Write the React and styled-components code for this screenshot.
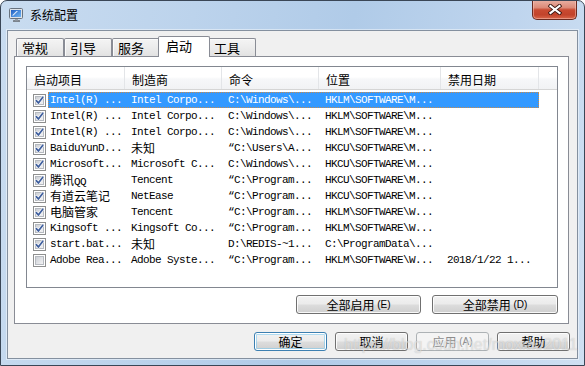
import React from "react";
import styled, { createGlobalStyle, css } from "styled-components";

const Global = createGlobalStyle`
  html, body { margin: 0; padding: 0; background: #ffffff; }
  body { font-family: "Noto Sans CJK SC", "Liberation Sans", sans-serif; }
  * { box-sizing: border-box; }
`;

const UI_FONT = `"Noto Sans CJK SC", "Liberation Sans", sans-serif`;

const Window = styled.div`
  position: relative;
  width: 585px;
  height: 366px;
  border: 1px solid #3a4656;
  border-radius: 7px 7px 0 0;
  background: linear-gradient(100deg, #c9dcf0 0%, #bcd3ec 30%, #b0cbe8 55%, #bfd5ee 80%, #cfe0f2 100%);
  display: flex;
  flex-direction: column;
  overflow: hidden;
`;

const TitleBar = styled.div`
  height: 29px;
  flex: none;
  display: flex;
  align-items: flex-start;
  padding-left: 7px;
  padding-right: 7px;
`;

const AppIcon = styled.svg`
  margin-top: 6px;
  flex: none;
`;

const Title = styled.div`
  margin-left: 6px;
  margin-top: 5px;
  font-family: ${UI_FONT};
  font-size: 12px;
  line-height: 18px;
  color: #000;
`;

const CloseBtn = styled.div`
  margin-left: auto;
  margin-top: -1px;
  width: 45px;
  height: 20px;
  border: 1px solid #6a2a20;
  border-top: none;
  border-radius: 0 0 5px 5px;
  background: linear-gradient(#e9b1a4 0%, #dc8a78 40%, #c94a31 52%, #c2432b 78%, #d9674a 100%);
  box-shadow: inset 0 0 0 1px rgba(255, 210, 200, 0.45);
  display: flex;
  align-items: center;
  justify-content: center;
`;

const Client = styled.div`
  flex: 1;
  margin: 0 6px 6px 6px;
  border: 1px solid #84909f;
  box-shadow: 0 0 0 1px rgba(255, 255, 255, 0.45);
  background: #f0f0f0;
  padding: 5px 8px 0 6px;
  display: flex;
  flex-direction: column;
`;

const TabStrip = styled.div`
  height: 20px;
  display: flex;
  align-items: flex-end;
  padding-left: 2px;
  position: relative;
  z-index: 2;
`;

const Tab = styled.div`
  width: 48px;
  height: 18px;
  border: 1px solid #898c95;
  border-bottom: none;
  border-radius: 2px 2px 0 0;
  padding-left: 5px;
  font-family: ${UI_FONT};
  font-size: 13px;
  line-height: 17px;
  color: #000;
  background: linear-gradient(#f4f4f4 0%, #ececec 50%, #e2e2e2 100%);
  box-shadow: inset 1px 1px 0 #fbfbfb;
  ${(p) =>
    p.$active &&
    css`
      width: 52px;
      height: 21px;
      margin: 0 -2px -1px -2px;
      padding-left: 7px;
      line-height: 18px;
      background: #ffffff;
      box-shadow: none;
      position: relative;
      z-index: 3;
    `}
`;

const Panel = styled.div`
  width: 555px;
  border: 1px solid #898c95;
  background: #ffffff;
  padding: 9px 10px 9px 11px;
  display: flex;
  flex-direction: column;
  position: relative;
  z-index: 1;
`;

const ListBox = styled.div`
  width: 532px;
  height: 222px;
  border: 1px solid #828790;
  background: #ffffff;
  display: flex;
  flex-direction: column;
`;

const HeaderRow = styled.div`
  height: 23px;
  display: flex;
  border-bottom: 1px solid #d5d5d5;
  background: linear-gradient(#ffffff 0%, #ffffff 45%, #f6f7f9 55%, #f1f2f4 100%);
`;

const HeaderCell = styled.div`
  width: ${(p) => p.$w}px;
  flex: none;
  border-right: ${(p) => (p.$last ? "none" : "1px solid #e3e5e8")};
  padding: 4px 0 0 7px;
  font-family: ${UI_FONT};
  font-size: 12px;
  line-height: 18px;
  color: #000;
  white-space: nowrap;
`;

const Rows = styled.div`
  padding-top: 2px;
  display: flex;
  flex-direction: column;
`;

const Row = styled.div`
  height: 16px;
  display: flex;
  align-items: center;
`;

const CheckArea = styled.div`
  width: 21px;
  flex: none;
  padding-left: 6px;
  display: flex;
  align-items: center;
`;

const RowBlock = styled.div`
  height: 16px;
  display: flex;
  color: ${(p) => (p.$sel ? "#ffffff" : "#000000")};
  background: ${(p) => (p.$sel ? "#3399ff" : "transparent")};
  outline: ${(p) => (p.$sel ? "1px dotted #c98a4a" : "none")};
  outline-offset: -1px;
`;

const Cell = styled.div`
  width: ${(p) => p.$w}px;
  flex: none;
  padding-left: ${(p) => p.$pad}px;
  font-family: "Liberation Mono", "Noto Sans CJK SC", monospace;
  font-size: 11px;
  letter-spacing: -0.6px;
  line-height: 16px;
  white-space: pre;
  overflow: hidden;
`;

const Han = styled.span`
  font-family: "Noto Sans CJK SC", sans-serif;
  font-size: 12px;
  letter-spacing: 0;
`;

const PanelActions = styled.div`
  margin-top: 7px;
  display: flex;
  justify-content: flex-end;
  gap: 11px;
`;

const DialogActions = styled.div`
  margin-top: 8px;
  display: flex;
  justify-content: flex-end;
  gap: 8px;
  margin-right: -1px;
`;

const Button = styled.div`
  width: ${(p) => p.$w}px;
  height: 19px;
  border: 1px solid ${(p) => (p.$disabled ? "#adb2b5" : p.$default ? "#3c7fb1" : "#707070")};
  border-radius: 3px;
  background: ${(p) =>
    p.$disabled
      ? "#f4f4f4"
      : "linear-gradient(#f2f2f2 0%, #ebebeb 49%, #dddddd 51%, #cfcfcf 100%)"};
  box-shadow: ${(p) =>
    p.$default
      ? "inset 0 0 0 1px #ffffff, inset 0 0 0 2px rgba(120, 200, 240, 0.55)"
      : p.$disabled
      ? "none"
      : "inset 0 0 0 1px rgba(255,255,255,0.85)"};
  display: flex;
  align-items: center;
  justify-content: center;
  font-family: ${UI_FONT};
  font-size: 12px;
  line-height: 17px;
  color: ${(p) => (p.$disabled ? "#8d8d8d" : "#000")};
  white-space: pre;
`;

const Mnemonic = styled.span`
  font-family: "Liberation Sans", sans-serif;
  font-size: 10px;
`;

const Watermark = styled.div`
  position: absolute;
  left: 343px;
  top: 334px;
  font-family: "Liberation Sans", sans-serif;
  font-size: 16px;
  line-height: 20px;
  color: rgba(255, 255, 255, 0.5);
  text-shadow: 0 0 1px rgba(90, 90, 90, 0.35);
  white-space: nowrap;
  pointer-events: none;
`;

const HAN = /([\u2E80-\u9FFF\uF900-\uFAFF\uFF00-\uFFEF]+)/;
const Mixed = ({ text }) =>
  text
    .split(HAN)
    .filter(Boolean)
    .map((part, i) =>
      HAN.test(part) ? <Han key={i}>{part}</Han> : <span key={i}>{part}</span>
    );

const CheckBox = ({ checked }) => (
  <svg width="13" height="13" viewBox="0 0 13 13">
    <defs>
      <linearGradient id="cbfill" x1="0" y1="0" x2="1" y2="1">
        <stop offset="0" stopColor="#c9cdd3" />
        <stop offset="1" stopColor="#f5f5f6" />
      </linearGradient>
    </defs>
    <rect x="0.5" y="0.5" width="12" height="12" fill="#ffffff" stroke="#8e8f8f" />
    <rect x="2.5" y="2.5" width="8" height="8" fill="url(#cbfill)" stroke="#b6bac0" />
    {checked && (
      <>
        <path d="M3.3 6.6 L5.4 9 L9.8 3.2" fill="none" stroke="#ffffff" strokeWidth="3" strokeLinecap="round" strokeLinejoin="round" opacity="0.8" />
        <path d="M3.3 6.6 L5.4 9 L9.8 3.2" fill="none" stroke="#3f5f9e" strokeWidth="1.7" strokeLinecap="round" strokeLinejoin="round" />
      </>
    )}
  </svg>
);

const MonitorIcon = () => (
  <AppIcon width="16" height="16" viewBox="0 0 16 16">
    <defs>
      <linearGradient id="scr" x1="0" y1="0" x2="1" y2="1">
        <stop offset="0" stopColor="#1f5fc4" />
        <stop offset="1" stopColor="#6fb4f2" />
      </linearGradient>
    </defs>
    <rect x="5" y="13" width="7" height="2" rx="0.5" fill="#7c848e" />
    <rect x="7" y="11" width="3" height="2.5" fill="#9aa2ab" />
    <rect x="1.5" y="1.5" width="13" height="10" rx="1" fill="#dfe3e8" stroke="#68727e" />
    <rect x="3" y="3" width="10" height="7" fill="url(#scr)" />
    <path d="M4 8.5 L8.5 4 L10 4 L5.5 8.5 Z" fill="#ffffff" opacity="0.85" />
  </AppIcon>
);

const CloseGlyph = () => (
  <svg width="14" height="11" viewBox="0 0 14 11">
    <path d="M2.5 2 L11.5 9 M11.5 2 L2.5 9" stroke="#3b1812" strokeWidth="4" strokeLinecap="square" />
    <path d="M2.5 2 L11.5 9 M11.5 2 L2.5 9" stroke="#ffffff" strokeWidth="2.2" strokeLinecap="square" />
  </svg>
);

const columns = [
  { title: "启动项目", w: 98 },
  { title: "制造商", w: 97 },
  { title: "命令", w: 97 },
  { title: "位置", w: 122 },
  { title: "禁用日期", w: 98 },
];
const rowWidths = [77, 97, 97, 122, 98];

const rows = [
  { on: true, sel: true, c: ["Intel(R) ...", "Intel Corpo...", "C:\\Windows\\...", "HKLM\\SOFTWARE\\M...", ""] },
  { on: true, c: ["Intel(R) ...", "Intel Corpo...", "C:\\Windows\\...", "HKLM\\SOFTWARE\\M...", ""] },
  { on: true, c: ["Intel(R) ...", "Intel Corpo...", "C:\\Windows\\...", "HKLM\\SOFTWARE\\M...", ""] },
  { on: true, c: ["BaiduYunD...", "未知", "\u201cC:\\Users\\A...", "HKCU\\SOFTWARE\\M...", ""] },
  { on: true, c: ["Microsoft...", "Microsoft C...", "C:\\Windows\\...", "HKCU\\SOFTWARE\\M...", ""] },
  { on: true, c: ["腾讯QQ", "Tencent", "\u201cC:\\Program...", "HKCU\\SOFTWARE\\M...", ""] },
  { on: true, c: ["有道云笔记", "NetEase", "\u201cC:\\Program...", "HKCU\\SOFTWARE\\M...", ""] },
  { on: true, c: ["电脑管家", "Tencent", "\u201cC:\\Program...", "HKLM\\SOFTWARE\\W...", ""] },
  { on: true, c: ["Kingsoft ...", "Kingsoft Co...", "\u201cC:\\Program...", "HKLM\\SOFTWARE\\W...", ""] },
  { on: true, c: ["start.bat...", "未知", "D:\\REDIS-~1...", "C:\\ProgramData\\...", ""] },
  { on: false, c: ["Adobe Rea...", "Adobe Syste...", "\u201cC:\\Program...", "HKLM\\SOFTWARE\\W...", "2018/1/22 1..."] },
];

const tabs = ["常规", "引导", "服务", "启动", "工具"];

export default function App() {
  return (
    <>
      <Global />
      <Window>
        <TitleBar>
          <MonitorIcon />
          <Title>系统配置</Title>
          <CloseBtn>
            <CloseGlyph />
          </CloseBtn>
        </TitleBar>
        <Client>
          <TabStrip>
            {tabs.map((t) => (
              <Tab key={t} $active={t === "启动"}>
                {t}
              </Tab>
            ))}
          </TabStrip>
          <Panel>
            <ListBox>
              <HeaderRow>
                {columns.map((c) => (
                  <HeaderCell key={c.title} $w={c.w}>
                    {c.title}
                  </HeaderCell>
                ))}
                <HeaderCell $w={18} $last />
              </HeaderRow>
              <Rows>
                {rows.map((r, i) => (
                  <Row key={i}>
                    <CheckArea>
                      <CheckBox checked={r.on} />
                    </CheckArea>
                    <RowBlock $sel={r.sel}>
                      {r.c.map((txt, j) => (
                        <Cell key={j} $w={rowWidths[j]} $pad={j === 0 ? 2 : 6}>
                          <Mixed text={txt} />
                        </Cell>
                      ))}
                    </RowBlock>
                  </Row>
                ))}
              </Rows>
            </ListBox>
            <PanelActions>
              <Button $w={125}>
                全部启用 <Mnemonic>(E)</Mnemonic>
              </Button>
              <Button $w={126}>
                全部禁用 <Mnemonic>(D)</Mnemonic>
              </Button>
            </PanelActions>
          </Panel>
          <DialogActions>
            <Button $w={73} $default>
              确定
            </Button>
            <Button $w={73}>取消</Button>
            <Button $w={73} $disabled>
              应用 <Mnemonic>(A)</Mnemonic>
            </Button>
            <Button $w={73}>帮助</Button>
          </DialogActions>
        </Client>
        <Watermark>https://blog.csdn.net/moxiao2011</Watermark>
      </Window>
    </>
  );
}
